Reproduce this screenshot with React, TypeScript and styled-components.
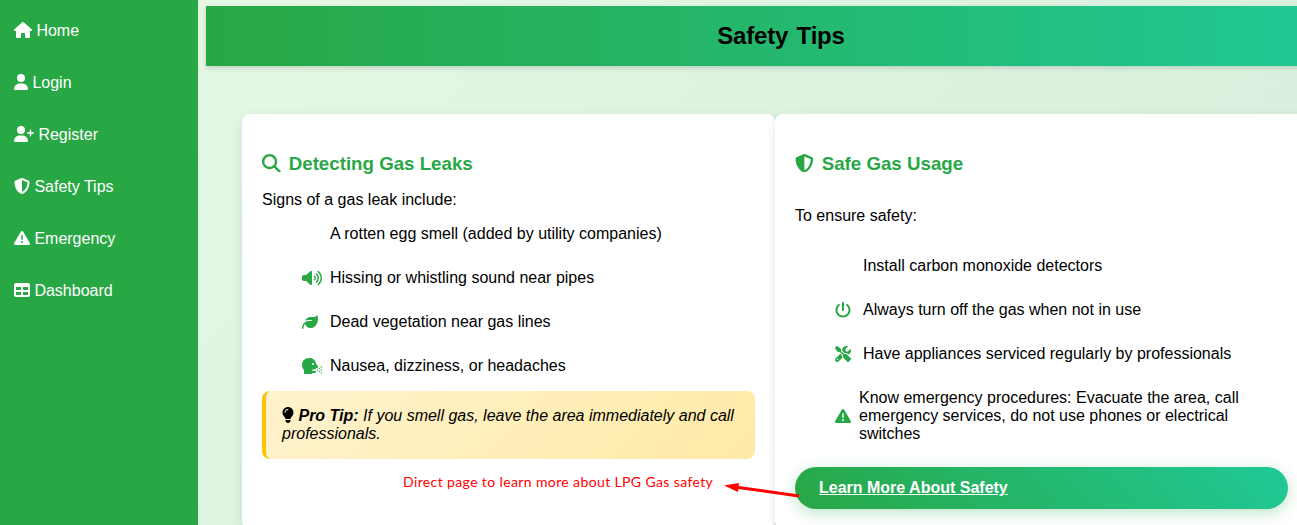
import * as React from 'react';
import styled, { createGlobalStyle } from 'styled-components';
import {
  FaHouse,
  FaUser,
  FaUserPlus,
  FaShieldHalved,
  FaTriangleExclamation,
  FaTable,
  FaMagnifyingGlass,
  FaVolumeHigh,
  FaLeaf,
  FaHeadSideCough,
  FaLightbulb,
  FaPowerOff,
  FaScrewdriverWrench
} from 'react-icons/fa6';

const colors = {
  green: '#28a745',
  teal: '#20c997',
  warning: '#ffc107',
  note: '#ff0000'
};

const GlobalStyle = createGlobalStyle`
  * {
    box-sizing: border-box;
  }

  body {
    margin: 0;
    overflow: hidden;
    font-family: "Liberation Sans", Arial, sans-serif;
    font-size: 16px;
    line-height: 18px;
    color: #000;
  }
`;

const Page = styled.div`
  display: flex;
  height: 525px;
  overflow: hidden;
  background: linear-gradient(135deg, #e6f9e6 0%, #d4edda 100%);
`;

// the glyphs are 1em high, but not all of them are square
const Glyph = styled.span<{ $width?: number }>`
  display: inline-flex;
  flex: none;
  vertical-align: -2px;

  svg {
    width: ${props => props.$width || 1}em;
    height: 1em;
  }
`;

const Sidebar = styled.nav`
  flex: 0 0 198px;
  padding-top: 5px;
  background: ${colors.green};
`;

const NavLink = styled.a`
  display: flex;
  align-items: center;
  gap: 4.4px;
  height: 52px;
  padding-left: 14px;
  color: #fff;

  ${Glyph} {
    margin-bottom: 2px;
  }
`;

const Main = styled.main`
  flex: 0 0 1150px;
  padding-top: 6px;
  margin-left: 8px;
`;

const Header = styled.header`
  display: flex;
  align-items: center;
  justify-content: center;
  height: 60px;
  background: linear-gradient(90deg, ${colors.green}, ${colors.teal});
  box-shadow: 0 2px 5px rgba(0, 0, 0, 0.15);
`;

const Title = styled.h1`
  margin: 0;
  font-size: 24px;
  line-height: 28px;
  letter-spacing: -0.2px;
  word-spacing: 2px;
`;

const Cards = styled.div`
  display: grid;
  grid-template-columns: 533px 533px;
  padding: 48px 36px 0;
`;

const Card = styled.section`
  position: relative;
  height: 415px;
  padding: 39px 20px 20px;
  background: #fff;
  border-radius: 8px;
  box-shadow: 0 4px 12px rgba(0, 0, 0, 0.1);
`;

const CardTitle = styled.h2`
  display: flex;
  align-items: center;
  gap: 8px;
  margin: 0;
  font-size: 18.72px;
  line-height: 22px;
  color: ${colors.green};

  ${Glyph} {
    margin-bottom: 2px;
  }
`;

const Intro = styled.p<{ $top: number }>`
  margin: ${props => props.$top}px 0 0;
`;

const List = styled.ul<{ $top: number }>`
  margin: ${props => props.$top}px 0 0;
  padding: 0 0 0 40px;
  list-style: none;
`;

const Item = styled.li`
  display: flex;
  align-items: center;
  padding: 13px 0;
`;

const ItemIcon = styled.span<{ $slot?: number }>`
  display: flex;
  flex: 0 0 ${props => props.$slot || 20}px;
  margin-right: 8px;
  color: ${colors.green};
`;

const Tip = styled.div`
  margin-top: 3px;
  padding: 16px;
  font-style: italic;
  background: linear-gradient(135deg, #fff3cd, #ffeaa7);
  border-left: 4px solid ${colors.warning};
  border-radius: 8px;
`;

const LearnMore = styled.a`
  display: block;
  margin-top: 11px;
  padding: 12px 24px;
  font-weight: bold;
  text-decoration: underline;
  color: #fff;
  background: linear-gradient(45deg, ${colors.green}, ${colors.teal});
  border-radius: 25px;
  box-shadow: 0 4px 15px rgba(40, 167, 69, 0.3);
`;

const Note = styled.div`
  position: absolute;
  left: 161px;
  top: 359px;
  font-family: Lato, "Open Sans", sans-serif;
  font-size: 14px;
  letter-spacing: 0.38px;
  white-space: nowrap;
  color: ${colors.note};
`;

const Arrow = styled.svg`
  position: absolute;
  left: -52px;
  top: 366px;
  width: 78px;
  height: 22px;
`;

const links = [
  { icon: FaHouse, label: 'Home', width: 1.125 },
  { icon: FaUser, label: 'Login', width: 0.875 },
  { icon: FaUserPlus, label: 'Register', width: 1.25 },
  { icon: FaShieldHalved, label: 'Safety Tips' },
  { icon: FaTriangleExclamation, label: 'Emergency' },
  { icon: FaTable, label: 'Dashboard' }
];

const leakSigns = [
  { label: 'A rotten egg smell (added by utility companies)' },
  { icon: FaVolumeHigh, label: 'Hissing or whistling sound near pipes', width: 1.25 },
  { icon: FaLeaf, label: 'Dead vegetation near gas lines' },
  { icon: FaHeadSideCough, label: 'Nausea, dizziness, or headaches', width: 1.25 }
];

const usageRules = [
  { label: 'Install carbon monoxide detectors' },
  { icon: FaPowerOff, label: 'Always turn off the gas when not in use' },
  { icon: FaScrewdriverWrench, label: 'Have appliances serviced regularly by professionals' },
  {
    icon: FaTriangleExclamation,
    label: 'Know emergency procedures: Evacuate the area, call emergency services, do not use phones or electrical switches',
    slot: 16
  }
];

type TipItem = { icon?: React.ComponentType, label: string, width?: number, slot?: number };

const TipList = ({ items, top }: { items: TipItem[], top: number }) => (
  <List $top={top}>
    {items.map(({ icon: Icon, label, width, slot }) => (
      <Item key={label}>
        <ItemIcon $slot={slot}>
          {Icon ? <Glyph $width={width}><Icon /></Glyph> : null}
        </ItemIcon>
        <span>{label}</span>
      </Item>
    ))}
  </List>
);

const App = () => (
  <>
    <GlobalStyle />
    <Page>
      <Sidebar>
        {links.map(({ icon: Icon, label, width }) => (
          <NavLink key={label}>
            <Glyph $width={width}><Icon /></Glyph>
            <span>{label}</span>
          </NavLink>
        ))}
      </Sidebar>
      <Main>
        <Header>
          <Title>Safety Tips</Title>
        </Header>
        <Cards>
          <Card>
            <CardTitle><Glyph><FaMagnifyingGlass /></Glyph>Detecting Gas Leaks</CardTitle>
            <Intro $top={16}>Signs of a gas leak include:</Intro>
            <TipList items={leakSigns} top={3} />
            <Tip>
              <Glyph $width={0.75}><FaLightbulb /></Glyph> <strong>Pro Tip:</strong> If you smell gas, leave the area immediately and call professionals.
            </Tip>
            <Note>Direct page to learn more about LPG Gas safety</Note>
          </Card>
          <Card>
            <CardTitle><Glyph><FaShieldHalved /></Glyph>Safe Gas Usage</CardTitle>
            <Intro $top={32}>To ensure safety:</Intro>
            <TipList items={usageRules} top={19} />
            <LearnMore>Learn More About Safety</LearnMore>
            <Arrow viewBox="0 0 78 22">
              <path d="M12 7L76 16" stroke={colors.note} strokeWidth="3" fill="none" />
              <path d="M1 5.500L16 3L15 12Z" fill={colors.note} />
            </Arrow>
          </Card>
        </Cards>
      </Main>
    </Page>
  </>
);

export default App;
